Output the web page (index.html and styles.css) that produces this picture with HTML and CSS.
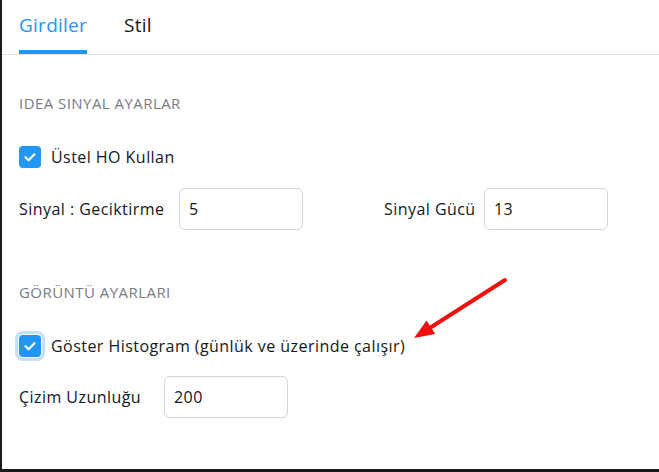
FILE: index.html
```html
<!DOCTYPE html>
<html lang="tr">
<head>
<meta charset="utf-8">
<title>Girdiler</title>
<link rel="stylesheet" href="styles.css">
</head>
<body>
<div class="panel">
  <div class="tabs">
    <div class="tab active">Girdiler</div>
    <div class="tab">Stil</div>
  </div>
  <div class="content">
    <div class="section-title first">IDEA SINYAL AYARLAR</div>
    <div class="row check-row r1">
      <span class="checkbox"><svg viewBox="0 0 22 22" width="22" height="22"><path d="M6.5 11.2 L9.6 14.2 L15.5 8.2" fill="none" stroke="#fff" stroke-width="2.2" stroke-linecap="round" stroke-linejoin="round"/></svg></span>
      <span class="check-label">Üstel HO Kullan</span>
    </div>
    <div class="row input-row r2">
      <span class="label l1">Sinyal : Geciktirme</span>
      <span class="input">5</span>
      <span class="label l2">Sinyal Gücü</span>
      <span class="input">13</span>
    </div>
    <div class="section-title second">GÖRÜNTÜ AYARLARI</div>
    <div class="row check-row r3">
      <span class="checkbox focused"><svg viewBox="0 0 22 22" width="22" height="22"><path d="M6.5 11.2 L9.6 14.2 L15.5 8.2" fill="none" stroke="#fff" stroke-width="2.2" stroke-linecap="round" stroke-linejoin="round"/></svg></span>
      <span class="check-label">Göster Histogram (günlük ve üzerinde çalışır)</span>
    </div>
    <div class="row input-row r4">
      <span class="label l3">Çizim Uzunluğu</span>
      <span class="input">200</span>
    </div>
  </div>
  <svg class="arrow" width="659" height="472" viewBox="0 0 659 472">
    <line x1="505" y1="280" x2="429" y2="328.5" stroke="#f01010" stroke-width="4" stroke-linecap="round"/>
    <polygon points="414,338 426.6,320.6 435.2,334" fill="#f01010"/>
  </svg>
</div>
</body>
</html>
```
FILE: styles.css
```css
html, body {
  margin: 0;
  padding: 0;
  background: #ffffff;
}
body {
  font-family: "Open Sans", "Noto Sans", sans-serif;
  color: #131722;
}
.panel {
  position: relative;
  width: 659px;
  height: 472px;
  box-sizing: border-box;
  border-left: 2px solid #1a1a1a;
  border-bottom: 3px solid #1a1a1a;
  overflow: hidden;
}
.tabs {
  display: flex;
  gap: 37px;
  height: 55px;
  box-sizing: border-box;
  padding-left: 17px;
  border-bottom: 1px solid #e0e3eb;
}
.tab {
  height: 54px;
  box-sizing: border-box;
  display: flex;
  align-items: center;
  padding-bottom: 4px;
  font-size: 19px;
  letter-spacing: 0.25px;
  color: #131722;
}
.tab.active {
  color: #2196f3;
  border-bottom: 4px solid #2196f3;
  padding-bottom: 0;
}
.content {
  padding-left: 17px;
  display: flex;
  flex-direction: column;
}
.section-title {
  font-size: 15px;
  letter-spacing: 0.45px;
  line-height: 20px;
  color: #787b86;
}
.section-title.first { margin-top: 38px; }
.section-title.second { margin-top: 52px; }
.row {
  display: flex;
  align-items: center;
  font-size: 16px;
  letter-spacing: 0.45px;
}
.check-row { height: 22px; }
.r1 { margin-top: 33px; }
.r3 { margin-top: 33px; }
.input-row { height: 42px; }
.r2 { margin-top: 20px; }
.r4 { margin-top: 19px; }
.checkbox {
  width: 22px;
  height: 22px;
  border-radius: 4px;
  background: #2196f3;
  display: block;
  flex: none;
}
.checkbox svg { display: block; }
.checkbox.focused {
  box-shadow: 0 0 0 1px #ffffff, 0 0 0 4px #c3dffb;
}
.check-label { margin-left: 10px; }
.label { flex: none; }
.l1 { width: 160px; }
.l2 { width: 100px; margin-left: 81px; }
.l3 { width: 145px; }
.input {
  width: 124px;
  height: 42px;
  box-sizing: border-box;
  border: 1px solid #d1d4dc;
  border-radius: 6px;
  padding-left: 9px;
  display: flex;
  align-items: center;
  flex: none;
}
.arrow {
  position: absolute;
  left: -2px;
  top: 0;
  pointer-events: none;
}
```
